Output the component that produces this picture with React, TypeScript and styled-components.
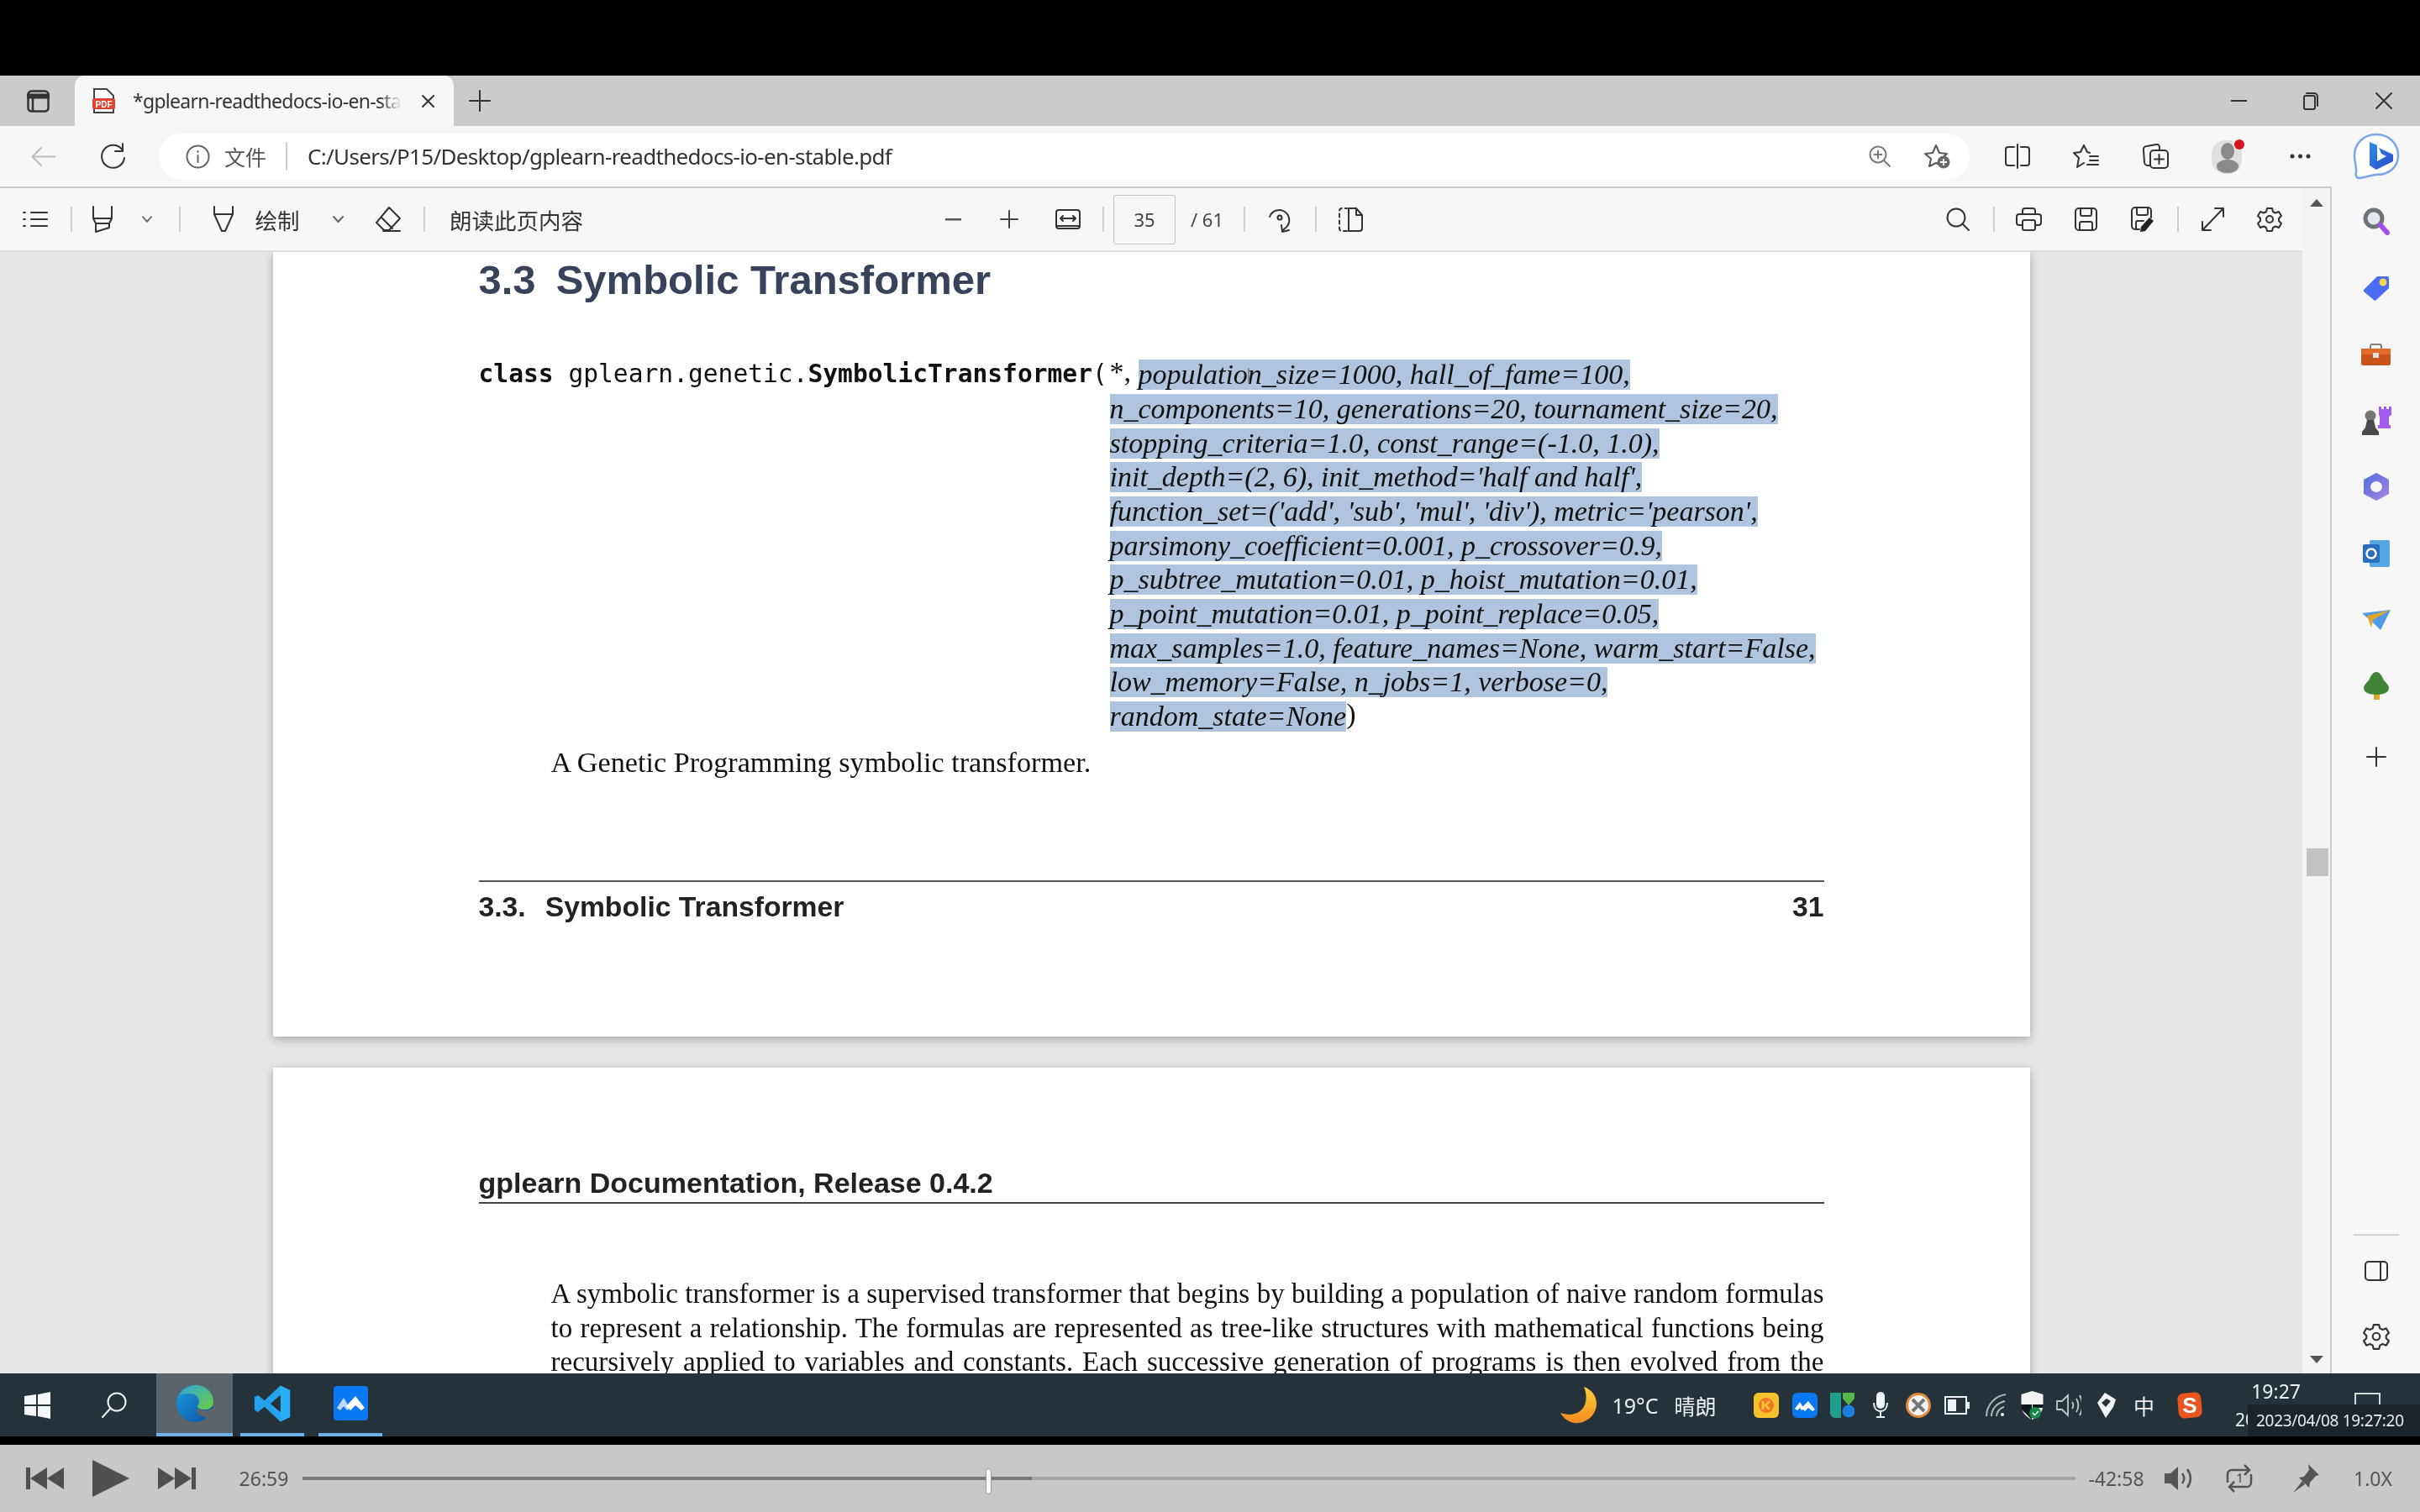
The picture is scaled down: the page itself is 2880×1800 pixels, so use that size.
import React from 'react';
import styled, { createGlobalStyle } from 'styled-components';

const GlobalStyle = createGlobalStyle`
  html, body {
    margin: 0;
    padding: 0;
    background: #000;
    font-family: "Noto Sans", "Noto Sans CJK SC", sans-serif;
  }
`;

const Screen = styled.div`
  width: 2880px;
  height: 1800px;
  display: flex;
  flex-direction: column;
  overflow: hidden;
  background: #000;
  position: relative;
  filter: blur(0.6px);
`;

const Slot = styled.span<{ $ml?: number; $w: number }>`
  flex: none;
  display: flex;
  align-items: center;
  justify-content: center;
  margin-left: ${p => p.$ml ?? 0}px;
  width: ${p => p.$w}px;
  color: #333;
  white-space: nowrap;
`;

const TopBlack = styled.div`
  height: 90px;
  flex: none;
`;

const TabStrip = styled.div`
  height: 60px;
  flex: none;
  display: flex;
  align-items: center;
  background: #cbcbcb;
`;

const Tab = styled.div`
  flex: none;
  align-self: stretch;
  width: 451px;
  margin-left: 30px;
  display: flex;
  align-items: center;
  background: #f7f7f7;
  border-radius: 12px 12px 0 0;
`;

const TabTitle = styled.span`
  flex: none;
  width: 320px;
  margin-left: 20px;
  overflow: hidden;
  white-space: nowrap;
  font-size: 23px;
  letter-spacing: -0.7px;
  color: #333;
  -webkit-mask-image: linear-gradient(90deg, #000 92%, transparent);
  mask-image: linear-gradient(90deg, #000 92%, transparent);
`;

const AddressRow = styled.div`
  height: 72px;
  flex: none;
  display: flex;
  align-items: center;
  background: #f7f7f7;
`;

const Omnibox = styled.div`
  flex: none;
  width: 2155px;
  height: 55px;
  margin-left: 39px;
  display: flex;
  align-items: center;
  background: #fff;
  border-radius: 28px;
  padding-right: 22px;
  box-sizing: border-box;
`;

const AddressLabel = styled.span`
  font-size: 25px;
  color: #555;
  flex: none;
  margin-left: 17px;
`;

const Divider = styled.span<{ $ml: number; $h?: number }>`
  flex: none;
  width: 2px;
  height: ${p => p.$h ?? 30}px;
  margin-left: ${p => p.$ml}px;
  background: #cfcfcf;
`;

const Url = styled.span`
  margin-left: 24px;
  margin-right: auto;
  font-size: 26px;
  letter-spacing: -0.67px;
  color: #333;
  white-space: nowrap;
`;

const Workspace = styled.div`
  flex: 1;
  min-height: 0;
  display: flex;
`;

const Viewer = styled.div`
  flex: none;
  width: 2775px;
  box-sizing: border-box;
  display: flex;
  border-top: 2px solid #c8c8c8;
`;

const ViewerMain = styled.div`
  flex: none;
  width: 2740px;
  display: flex;
  flex-direction: column;
  min-height: 0;
`;

const PdfToolbar = styled.div`
  height: 74px;
  flex: none;
  display: flex;
  align-items: center;
  background: #f7f7f7;
  border-bottom: 2px solid #dedede;
`;

const PageBox = styled.span`
  flex: none;
  width: 74px;
  height: 59px;
  box-sizing: border-box;
  margin-left: 11px;
  display: flex;
  align-items: center;
  justify-content: center;
  border: 1px solid #c4c4c4;
  border-radius: 3px;
  font-size: 22px;
  color: #444;
`;

const ToolText = styled(Slot)`
  font-size: 26.5px;
  color: #333;
`;

const PageCount = styled(Slot)`
  font-size: 22px;
  color: #444;
`;

const DocArea = styled.div`
  flex: 1;
  min-height: 0;
  overflow: hidden;
  display: flex;
  flex-direction: column;
  align-items: center;
  gap: 37px;
  background: #e6e6e6;
`;

const Page = styled.div<{ $h: number }>`
  flex: none;
  width: 2091px;
  height: ${p => p.$h}px;
  box-sizing: border-box;
  padding: 0 245px;
  position: relative;
  background: #fff;
  box-shadow: 0 3px 10px rgba(0, 0, 0, 0.28);
  font-family: "Liberation Serif", serif;
  color: #111;
`;

const SectionTitle = styled.h2`
  margin: 0;
  padding-top: 3px;
  height: 60px;
  line-height: 60px;
  font-family: "Liberation Sans", sans-serif;
  font-size: 49px;
  font-weight: 700;
  color: #38425a;
  display: flex;
  gap: 24px;
`;

const Signature = styled.div`
  margin-top: 60px;
  display: flex;
`;

const SigName = styled.div`
  flex: none;
  width: 751px;
  height: 41px;
  padding-top: 2px;
  line-height: 41px;
  font-family: "DejaVu Sans Mono", "Liberation Mono", monospace;
  font-size: 29.6px;
  color: #111;
  white-space: pre;
`;

const SigParams = styled.div`
  flex: none;
  font-size: 34px;
  font-style: italic;
`;

const ParamLine = styled.div`
  height: 40.7px;
  line-height: 40.7px;
  white-space: pre;
`;

const Selected = styled.span`
  display: inline-block;
  height: 36px;
  line-height: 36px;
  vertical-align: middle;
  background: #afc5df;
`;

const Upright = styled.span`
  font-style: normal;
`;

const Summary = styled.p`
  margin: 17px 0 0 86px;
  font-size: 34.2px;
  line-height: 40px;
`;

const PageFooter = styled.div`
  margin-top: 120px;
  padding-top: 9px;
  border-top: 2px solid #555;
  display: flex;
  justify-content: space-between;
  font-family: "Liberation Sans", sans-serif;
  font-size: 33.7px;
  font-weight: 700;
  line-height: 40px;
  color: #222;
`;

const FooterLabel = styled.span`
  display: flex;
  gap: 23px;
`;

const PageHeader = styled.div`
  padding-top: 117px;
  padding-bottom: 3px;
  line-height: 40px;
  border-bottom: 2px solid #444;
  font-family: "Liberation Sans", sans-serif;
  font-size: 34px;
  font-weight: 700;
  color: #222;
`;

const Paragraph = styled.div`
  margin: 87px 0 0 86px;
  font-size: 33px;
`;

const ParaLine = styled.div`
  height: 40.7px;
  line-height: 40.7px;
  text-align: justify;
  text-align-last: justify;
`;

const Cursor = styled.span`
  position: absolute;
  left: 1160px;
  top: 138px;
  width: 2px;
  height: 18px;
  background: #8a8a8a;
`;

const ScrollTrack = styled.div`
  flex: none;
  width: 35px;
  box-sizing: border-box;
  display: flex;
  flex-direction: column;
  align-items: center;
  position: relative;
  background: #f4f4f4;
  border-right: 2px solid #cbcbcb;
`;

const ScrollThumb = styled.div`
  position: absolute;
  left: 5px;
  top: 786px;
  width: 26px;
  height: 33px;
  background: #c2c2c2;
`;

const ScrollUp = styled.span`
  margin-top: 13px;
  width: 0;
  height: 0;
  border-left: 8px solid transparent;
  border-right: 8px solid transparent;
  border-bottom: 9px solid #555;
`;

const ScrollDown = styled.span`
  margin-top: auto;
  margin-bottom: 12px;
  width: 0;
  height: 0;
  border-left: 8px solid transparent;
  border-right: 8px solid transparent;
  border-top: 9px solid #555;
`;

const Sidebar = styled.div`
  flex: 1;
  display: flex;
  flex-direction: column;
  align-items: center;
  padding: 2px 0 1px;
  background: #f7f7f7;
`;

const SideSlot = styled.div<{ $h?: number }>`
  flex: none;
  height: ${p => p.$h ?? 79}px;
  display: flex;
  align-items: center;
  justify-content: center;
`;

const SideRule = styled.div`
  margin-top: auto;
  margin-bottom: 7px;
  width: 54px;
  height: 2px;
  background: #cfcfcf;
`;

const Taskbar = styled.div`
  height: 75px;
  flex: none;
  display: flex;
  align-items: center;
  background: #25323a;
`;

const TaskApp = styled.div<{ $ml: number; $w: number; $active?: boolean }>`
  flex: none;
  align-self: stretch;
  width: ${p => p.$w}px;
  margin-left: ${p => p.$ml}px;
  display: flex;
  align-items: center;
  justify-content: center;
  box-sizing: border-box;
  border-bottom: 4px solid #6db1e6;
  background: ${p => (p.$active ? '#5a646a' : 'transparent')};
`;

const TrayText = styled(Slot)`
  color: #eef2f4;
  font-size: 25px;
`;

const Clock = styled.div`
  flex: none;
  width: 78px;
  margin-left: 39px;
  display: flex;
  flex-direction: column;
  color: #eef2f4;
  font-size: 21px;
  line-height: 34px;
  white-space: nowrap;
`;

const ClockTime = styled.span`
  text-align: right;
  font-size: 23px;
`;

const NotifyBox = styled.span`
  flex: none;
  width: 31px;
  height: 36px;
  box-sizing: border-box;
  margin: 6px 0 0 64px;
  border: 2px solid #d5d9dc;
`;

const Stamp = styled.div`
  position: absolute;
  right: 0;
  top: 1672px;
  width: 205px;
  height: 38px;
  display: flex;
  align-items: center;
  padding-left: 10px;
  box-sizing: border-box;
  background: #1b252b;
  color: #e8ecee;
  font-size: 19px;
  letter-spacing: -0.3px;
  white-space: nowrap;
`;

const BlackGap = styled.div`
  height: 10px;
  flex: none;
`;

const Player = styled.div`
  height: 80px;
  flex: none;
  display: flex;
  align-items: center;
  background: #c8c8c8;
`;

const PlayerText = styled(Slot)`
  color: #555;
  font-size: 23px;
`;

const SeekBar = styled.div`
  flex: none;
  width: 2110px;
  height: 4px;
  margin-left: 15px;
  position: relative;
  background: #a6a6a6;
`;

const SeekFill = styled.div`
  position: absolute;
  left: 0;
  top: 0;
  bottom: 0;
  background: #7a7a7a;
`;

const SeekHandle = styled.div`
  position: absolute;
  top: -10px;
  width: 7px;
  height: 31px;
  margin-left: -3px;
  box-sizing: border-box;
  border: 1px solid #9a9a9a;
  border-radius: 4px;
  background: #fafafa;
`;

const ic = { fill: 'none', stroke: '#333', strokeWidth: 2, strokeLinecap: 'round', strokeLinejoin: 'round' } as const;
const lt = { ...ic, stroke: '#eef2f4' };

const params = [
  'population_size=1000, hall_of_fame=100,',
  'n_components=10, generations=20, tournament_size=20,',
  'stopping_criteria=1.0, const_range=(-1.0, 1.0),',
  "init_depth=(2, 6), init_method='half and half',",
  "function_set=('add', 'sub', 'mul', 'div'), metric='pearson',",
  'parsimony_coefficient=0.001, p_crossover=0.9,',
  'p_subtree_mutation=0.01, p_hoist_mutation=0.01,',
  'p_point_mutation=0.01, p_point_replace=0.05,',
  'max_samples=1.0, feature_names=None, warm_start=False,',
  'low_memory=False, n_jobs=1, verbose=0,',
];

const Gear = ({ s = 30 }: { s?: number }) => (
  <svg width={s} height={s} viewBox="0 0 30 30" {...ic}>
    <path d="M12 2h6l1 4 3 1.500 4-1.500 3 5-3 3v3l3 3-3 5-4-1.500-3 1.500-1 4h-6l-1-4-3-1.500-4 1.500-3-5 3-3v-3l-3-3 3-5 4 1.500 3-1.500z" />
    <circle cx="15" cy="15" r="4" />
  </svg>
);

const Chevron = () => (
  <svg width="13" height="8" viewBox="0 0 13 8" {...ic} stroke="#666">
    <path d="M1 1l5.500 6L12 1" />
  </svg>
);

const Bar = ({ ml }: { ml: number }) => <Divider $ml={ml} />;

function TabBar() {
  return (
    <TabStrip>
      <Slot $ml={32} $w={27}>
        <svg width="27" height="27" viewBox="0 0 27 27" {...ic} strokeWidth={2.500}>
          <rect x="1.500" y="1.500" width="24" height="24" rx="4" />
          <path d="M1.500 7.500h24" strokeWidth={6} />
          <path d="M7 7v18" />
        </svg>
      </Slot>
      <Tab>
        <Slot $ml={20} $w={29}>
          <svg width="29" height="30" viewBox="0 0 29 30">
            <path d="M3 1h15l8 8v20H3z" fill="#fff" stroke="#444" strokeWidth="2" />
            <rect x="1" y="12" width="27" height="13" rx="2" fill="#e2432f" />
            <text x="14.500" y="22.500" fontSize="10" fontWeight="700" fill="#fff" textAnchor="middle" fontFamily="Liberation Sans">PDF</text>
          </svg>
        </Slot>
        <TabTitle>*gplearn-readthedocs-io-en-stable.pdf</TabTitle>
        <Slot $ml={24} $w={15}>
          <svg width="15" height="15" viewBox="0 0 15 15" {...ic}>
            <path d="M1 1l13 13M14 1L1 14" />
          </svg>
        </Slot>
      </Tab>
      <Slot $ml={18} $w={26}>
        <svg width="26" height="26" viewBox="0 0 26 26" {...ic}>
          <path d="M13 1v24M1 13h24" />
        </svg>
      </Slot>
      <Slot $ml={2071} $w={19}>
        <svg width="19" height="3" viewBox="0 0 19 3">
          <rect width="19" height="2" fill="#333" />
        </svg>
      </Slot>
      <Slot $ml={67} $w={18}>
        <svg width="18" height="22" viewBox="0 0 18 22" {...ic}>
          <rect x="1" y="5" width="13" height="16" rx="2" />
          <path d="M4 2h9a4 4 0 0 1 4 4v11" />
        </svg>
      </Slot>
      <Slot $ml={68} $w={20}>
        <svg width="20" height="20" viewBox="0 0 20 20" {...ic}>
          <path d="M1 1l18 18M19 1L1 19" />
        </svg>
      </Slot>
    </TabStrip>
  );
}

function AddressBar() {
  return (
    <AddressRow>
      <Slot $ml={37} $w={29}>
        <svg width="29" height="25" viewBox="0 0 29 25" {...ic} stroke="#bdbdbd">
          <path d="M28 12.500H2M12 2L1.500 12.500 12 23" />
        </svg>
      </Slot>
      <Slot $ml={53} $w={31}>
        <svg width="31" height="33" viewBox="0 0 31 33" {...ic}>
          <path d="M27 9A13.500 13.500 0 1 0 29 18" />
          <path d="M27 1v9h-9" />
        </svg>
      </Slot>
      <Omnibox>
        <Slot $ml={32} $w={29}>
          <svg width="29" height="29" viewBox="0 0 29 29" {...ic} stroke="#666">
            <circle cx="14.500" cy="14.500" r="13" />
            <path d="M14.500 13v8M14.500 8v1" />
          </svg>
        </Slot>
        <AddressLabel>文件</AddressLabel>
        <Divider $ml={23} $h={34} />
        <Url>C:/Users/P15/Desktop/gplearn-readthedocs-io-en-stable.pdf</Url>
        <Slot $w={26}>
          <svg width="26" height="26" viewBox="0 0 26 26" {...ic} stroke="#777">
            <circle cx="11" cy="11" r="9.500" />
            <path d="M18 18l7 7M11 6.500v9M6.500 11h9" />
          </svg>
        </Slot>
        <Slot $ml={39} $w={33}>
          <svg width="33" height="30" viewBox="0 0 33 30">
            <path d="M15 2l4 9 9 1-7 6 2 9-8-4-8 4 2-9-7-6 9-1z" fill="none" stroke="#555" strokeWidth="2" strokeLinejoin="round" />
            <circle cx="24" cy="22" r="7.500" fill="#6a6a6a" />
            <path d="M24 18v8M20 22h8" stroke="#fff" strokeWidth="2" />
          </svg>
        </Slot>
      </Omnibox>
      <Slot $ml={42} $w={30}>
        <svg width="30" height="30" viewBox="0 0 30 30" {...ic}>
          <path d="M11 4H4a3 3 0 0 0-3 3v16a3 3 0 0 0 3 3h7M19 4h7a3 3 0 0 1 3 3v16a3 3 0 0 1-3 3h-7M15 1v28" />
        </svg>
      </Slot>
      <Slot $ml={51} $w={32}>
        <svg width="32" height="30" viewBox="0 0 32 30" {...ic}>
          <path d="M20 11l-3-1-4-8-4 8-8 1 6 6-2 11 8-5" />
          <path d="M20 15h10M20 20h10M17 25h13" />
        </svg>
      </Slot>
      <Slot $ml={51} $w={31}>
        <svg width="31" height="30" viewBox="0 0 31 30" {...ic}>
          <rect x="9" y="8" width="21" height="21" rx="4" />
          <path d="M19.500 13v11M14 18.500h11M9 26H6a4 4 0 0 1-4-4L1 8a4 4 0 0 1 4-5l11-2a3 3 0 0 1 4 3v3" />
        </svg>
      </Slot>
      <Slot $ml={50} $w={41}>
        <svg width="41" height="42" viewBox="0 0 41 42">
          <rect x="1" y="2" width="36" height="40" rx="16" fill="#e0e0e0" />
          <ellipse cx="20" cy="15" rx="8" ry="10" fill="#8a8a8a" />
          <ellipse cx="20" cy="33" rx="13" ry="8" fill="#8a8a8a" />
          <circle cx="34" cy="7" r="6" fill="#d9121f" />
        </svg>
      </Slot>
      <Slot $ml={53} $w={25}>
        <svg width="25" height="6" viewBox="0 0 25 6" fill="#333">
          <circle cx="3" cy="3" r="2.500" />
          <circle cx="12.500" cy="3" r="2.500" />
          <circle cx="22" cy="3" r="2.500" />
        </svg>
      </Slot>
      <Slot $ml={50} $w={56}>
        <svg width="56" height="56" viewBox="0 0 56 56">
          <defs>
            <linearGradient id="bingMark" x1="0" y1="0" x2="1" y2="1">
              <stop offset="0" stopColor="#2f8fe8" />
              <stop offset="1" stopColor="#2b49c8" />
            </linearGradient>
          </defs>
          <path d="M28 2c15 0 26 11 26 25S43 50 28 50c-5 0-12 3-20 4-4 0-5-3-4-8 1-3-2-10-2-19C2 13 13 2 28 2z" fill="#fff" stroke="#7aa7ea" strokeWidth="2.500" />
          <path d="M20 11l9 4v19l11-6-6-3-3-7 17 8v8L28 44l-8-5z" fill="url(#bingMark)" />
        </svg>
      </Slot>
    </AddressRow>
  );
}

function PdfBar() {
  return (
    <PdfToolbar>
      <Slot $ml={27} $w={30}>
        <svg width="30" height="22" viewBox="0 0 30 22" {...ic}>
          <path d="M10 3h19M10 11h19M10 19h19M1 3h2M1 11h2M1 19h2" />
        </svg>
      </Slot>
      <Bar ml={27} />
      <Slot $ml={23} $w={26}>
        <svg width="26" height="32" viewBox="0 0 26 32" {...ic}>
          <path d="M2 1v14l3 6v10l16-5v-5l3-6V1M2 15h22M5 21h16" />
        </svg>
      </Slot>
      <Slot $ml={34} $w={12}>
        <Chevron />
      </Slot>
      <Bar ml={32} />
      <Slot $ml={36} $w={30}>
        <svg width="30" height="32" viewBox="0 0 30 32" {...ic}>
          <path d="M4 1v9l9 20h4l9-20V1M4 10h22" />
        </svg>
      </Slot>
      <ToolText $ml={23} $w={52}>绘制</ToolText>
      <Slot $ml={40} $w={13}>
        <Chevron />
      </Slot>
      <Slot $ml={37} $w={32}>
        <svg width="32" height="32" viewBox="0 0 32 32" {...ic}>
          <path d="M17 2l13 13-13 14h-6L2 20zM8 14l13 13M10 30h20" />
        </svg>
      </Slot>
      <Bar ml={26} />
      <ToolText $ml={31} $w={155}>朗读此页内容</ToolText>
      <Slot $ml={433} $w={19}>
        <svg width="19" height="3" viewBox="0 0 19 3">
          <rect width="19" height="2.500" fill="#555" />
        </svg>
      </Slot>
      <Slot $ml={46} $w={22}>
        <svg width="22" height="22" viewBox="0 0 22 22" {...ic} stroke="#444">
          <path d="M11 1v20M1 11h20" />
        </svg>
      </Slot>
      <Slot $ml={44} $w={30}>
        <svg width="30" height="24" viewBox="0 0 30 24" {...ic}>
          <rect x="1" y="1" width="28" height="22" rx="3" />
          <path d="M1 20h28M6 11h18M9 8l-3 3 3 3M21 8l3 3-3 3" />
        </svg>
      </Slot>
      <Bar ml={26} />
      <PageBox>35</PageBox>
      <PageCount $ml={19} $w={37}>/ 61</PageCount>
      <Bar ml={25} />
      <Slot $ml={25} $w={31}>
        <svg width="31" height="34" viewBox="0 0 31 34" {...ic}>
          <path d="M4 14a12 12 0 1 1 18 14l-3 3" />
          <path d="M18 24l1 8 8-2" />
          <circle cx="16" cy="15" r="2.500" />
        </svg>
      </Slot>
      <Bar ml={27} />
      <Slot $ml={25} $w={31}>
        <svg width="31" height="30" viewBox="0 0 31 30" {...ic}>
          <path d="M11 29H5a3 3 0 0 1-3-3V5a3 3 0 0 1 3-3h6" strokeDasharray="4 4" />
          <path d="M13 2h9l7 8v16a3 3 0 0 1-3 3H13zM22 2v8h7" />
        </svg>
      </Slot>
      <Slot $ml={693} $w={28}>
        <svg width="28" height="28" viewBox="0 0 28 28" {...ic}>
          <circle cx="12" cy="12" r="10.500" />
          <path d="M19.500 19.500L27 27" />
        </svg>
      </Slot>
      <Bar ml={28} />
      <Slot $ml={25} $w={31}>
        <svg width="31" height="28" viewBox="0 0 31 28" {...ic}>
          <path d="M8 8V4a3 3 0 0 1 3-3h9a3 3 0 0 1 3 3v4" />
          <path d="M8 21H4a3 3 0 0 1-3-3v-7a3 3 0 0 1 3-3h23a3 3 0 0 1 3 3v7a3 3 0 0 1-3 3h-4" />
          <rect x="8" y="15" width="15" height="12" rx="2" />
        </svg>
      </Slot>
      <Slot $ml={39} $w={27}>
        <svg width="27" height="28" viewBox="0 0 27 28" {...ic}>
          <rect x="1" y="1" width="25" height="26" rx="4" />
          <path d="M7 1v7a2 2 0 0 0 2 2h9a2 2 0 0 0 2-2V1M6 27v-8a2 2 0 0 1 2-2h11a2 2 0 0 1 2 2v8" />
        </svg>
      </Slot>
      <Slot $ml={40} $w={28}>
        <svg width="28" height="30" viewBox="0 0 28 30">
          <g {...ic}>
            <path d="M10 27H5a4 4 0 0 1-4-4V5a4 4 0 0 1 4-4h15a4 4 0 0 1 4 4v8" />
            <path d="M7 1v7a2 2 0 0 0 2 2h9a2 2 0 0 0 2-2V1M6 27v-8a2 2 0 0 1 2-2h7" />
          </g>
          <path d="M22 13l5 4-10 12-6 1 1-6z" fill="#222" />
        </svg>
      </Slot>
      <Bar ml={27} />
      <Slot $ml={26} $w={29}>
        <svg width="29" height="30" viewBox="0 0 29 30" {...ic}>
          <path d="M27 2L2 28M17 2h10v10M2 18v10h10" />
        </svg>
      </Slot>
      <Slot $ml={38} $w={30}>
        <Gear />
      </Slot>
    </PdfToolbar>
  );
}

function Document() {
  return (
    <DocArea>
      <Page $h={934}>
        <SectionTitle>
          <span>3.3</span>
          <span>Symbolic Transformer</span>
        </SectionTitle>
        <Signature>
          <SigName>
            <b>class</b> gplearn.genetic.<b>SymbolicTransformer</b>(
          </SigName>
          <SigParams>
            <ParamLine>
              <Upright>*, </Upright>
              <Selected>{params[0]}</Selected>
            </ParamLine>
            {params.slice(1).map(line => (
              <ParamLine key={line}>
                <Selected>{line}</Selected>
              </ParamLine>
            ))}
            <ParamLine>
              <Selected>random_state=None</Selected>
              <Upright>)</Upright>
            </ParamLine>
          </SigParams>
        </Signature>
        <Summary>A Genetic Programming symbolic transformer.</Summary>
        <PageFooter>
          <FooterLabel>
            <span>3.3.</span>
            <span>Symbolic Transformer</span>
          </FooterLabel>
          <span>31</span>
        </PageFooter>
        <Cursor />
      </Page>
      <Page $h={500}>
        <PageHeader>gplearn Documentation, Release 0.4.2</PageHeader>
        <Paragraph>
          <ParaLine>A symbolic transformer is a supervised transformer that begins by building a population of naive random formulas</ParaLine>
          <ParaLine>to represent a relationship. The formulas are represented as tree-like structures with mathematical functions being</ParaLine>
          <ParaLine>recursively applied to variables and constants. Each successive generation of programs is then evolved from the</ParaLine>
        </Paragraph>
      </Page>
    </DocArea>
  );
}

function SideIcons() {
  return (
    <Sidebar>
      <SideSlot>
        <svg width="32" height="33" viewBox="0 0 32 33">
          <circle cx="13" cy="13" r="10" fill="#e3e8ee" stroke="#6e7378" strokeWidth="5" />
          <path d="M21 21l8 9" stroke="#a450e8" strokeWidth="6" strokeLinecap="round" />
        </svg>
      </SideSlot>
      <SideSlot>
        <svg width="31" height="30" viewBox="0 0 31 30">
          <path d="M1 17L16 2a3 3 0 0 1 2-1h11a2 2 0 0 1 2 2v12L16 29a2 2 0 0 1-3 0L1 19z" fill="#4a6cf2" />
          <circle cx="24" cy="8" r="4.500" fill="#f1d451" />
        </svg>
      </SideSlot>
      <SideSlot>
        <svg width="35" height="26" viewBox="0 0 35 26">
          <path d="M11 7V3a2 2 0 0 1 2-2h9a2 2 0 0 1 2 2v4" fill="none" stroke="#7f7f7f" strokeWidth="2" />
          <rect x="0" y="6" width="35" height="20" rx="2" fill="#c8541b" />
          <rect x="0" y="6" width="35" height="7" fill="#e06a27" />
          <rect x="14" y="11" width="7" height="6" fill="#ddd" />
        </svg>
      </SideSlot>
      <SideSlot>
        <svg width="36" height="35" viewBox="0 0 36 35">
          <path d="M21 1h3v3h3V1h3v3h3V1h3v10l-3 2v10h2v4H20v-4h2V13l-1-2z" fill="#a35bf0" />
          <circle cx="11" cy="12" r="6.500" fill="#777" />
          <path d="M7 17h8l2 9 4 5v4H1v-4l4-5z" fill="#4a4a4a" />
        </svg>
      </SideSlot>
      <SideSlot>
        <svg width="32" height="33" viewBox="0 0 32 33">
          <defs>
            <linearGradient id="officeRing" x1="0" y1="0" x2="1" y2="1">
              <stop offset="0" stopColor="#4f6fe0" />
              <stop offset="1" stopColor="#a584dd" />
            </linearGradient>
          </defs>
          <path d="M16 0l15 8v17l-15 8-15-8V8z" fill="url(#officeRing)" />
          <ellipse cx="16" cy="16.500" rx="7" ry="6.500" fill="#f7f7f7" />
        </svg>
      </SideSlot>
      <SideSlot>
        <svg width="32" height="32" viewBox="0 0 32 32">
          <rect x="8" y="0" width="24" height="32" rx="2" fill="#55a6e3" />
          <rect x="0" y="5" width="20" height="22" rx="2" fill="#2a6ebd" />
          <circle cx="10" cy="16" r="5.500" fill="none" stroke="#fff" strokeWidth="2.500" />
        </svg>
      </SideSlot>
      <SideSlot>
        <svg width="34" height="24" viewBox="0 0 34 24">
          <path d="M0 4l34-4-12 24-7-7z" fill="#4f9bea" />
          <path d="M6 7l28-7-21 12-2 9z" fill="#dfa62a" />
        </svg>
      </SideSlot>
      <SideSlot>
        <svg width="32" height="33" viewBox="0 0 32 33">
          <rect x="13" y="25" width="7" height="8" fill="#e0a42d" />
          <path d="M16 0c4 0 7 5 9 10 3 3 6 6 6 9 0 5-6 8-15 8S1 24 1 19c0-3 3-6 6-9 2-5 5-10 9-10z" fill="#3f8437" />
        </svg>
      </SideSlot>
      <SideSlot $h={89}>
        <svg width="24" height="24" viewBox="0 0 24 24" {...ic}>
          <path d="M12 1v22M1 12h22" />
        </svg>
      </SideSlot>
      <SideRule />
      <SideSlot $h={70}>
        <svg width="28" height="24" viewBox="0 0 28 24" {...ic}>
          <rect x="1" y="1" width="26" height="22" rx="4" />
          <path d="M19 1v22" />
        </svg>
      </SideSlot>
      <SideSlot $h={86}>
        <Gear s={32} />
      </SideSlot>
    </Sidebar>
  );
}

function WindowsBar() {
  return (
    <Taskbar>
      <Slot $ml={29} $w={31}>
        <svg width="31" height="32" viewBox="0 0 31 32" fill="#f4f6f7">
          <path d="M0 5l14-2v12H0zM16 3l15-3v15H16zM0 17h14v12L0 27zM16 17h15v15l-15-3z" />
        </svg>
      </Slot>
      <Slot $ml={60} $w={31}>
        <svg width="31" height="31" viewBox="0 0 31 31" {...lt}>
          <circle cx="19" cy="12" r="10.500" />
          <path d="M11.500 19.500L2 30" />
        </svg>
      </Slot>
      <TaskApp $ml={35} $w={91} $active>
        <svg width="46" height="46" viewBox="0 0 46 46">
          <defs>
            <linearGradient id="edgeGreen" x1="0" y1="0" x2="1" y2="1">
              <stop offset="0" stopColor="#2ea4df" />
              <stop offset="1" stopColor="#6fd13a" />
            </linearGradient>
            <linearGradient id="edgeBlue" x1="0" y1="0" x2="1" y2="1">
              <stop offset="0" stopColor="#1b9de2" />
              <stop offset="1" stopColor="#0c4f9e" />
            </linearGradient>
          </defs>
          <circle cx="23" cy="23" r="22" fill="url(#edgeBlue)" />
          <path d="M4 13C9 4 18 1 24 1c12 0 21 9 21 20 0 6-5 9-10 9-5 0-9-2-9-4 0-1 2-2 2-5 0-6-5-10-11-10C12 11 7 12 4 13Z" fill="url(#edgeGreen)" />
          <path d="M46 26c-3 4-7 5-11 5-4 0-7-1-9-3-2 3-1 7 3 9l8 3c5-3 9-8 9-14Z" fill="#5a646a" />
        </svg>
      </TaskApp>
      <TaskApp $ml={9} $w={76}>
        <svg width="46" height="46" viewBox="0 0 100 100">
          <path fillRule="evenodd" d="M71 3l25 12v70L71 97 30 58 13 72l-9-5V33l9-5 17 14zM71 28L46 50l25 22z" fill="#23a3ef" />
          <path d="M71 3l25 12v70L71 97z" fill="#2cb0f5" fillOpacity="0.8" />
          <path fillRule="evenodd" d="M71 28L46 50l25 22z" fill="#25323a" />
        </svg>
      </TaskApp>
      <TaskApp $ml={17} $w={76}>
        <svg width="41" height="41" viewBox="0 0 41 41">
          <rect width="41" height="41" rx="4" fill="#0a78f2" />
          <path d="M4 26l8-12 7 12-3 3-4-5-4 5z" fill="#bcd8fb" />
          <path d="M15 24l11-12 11 14-4 3-7-6-6 6z" fill="#fff" />
        </svg>
      </TaskApp>
      <Slot $ml={1402} $w={43}>
        <svg width="43" height="44" viewBox="0 0 43 44">
          <defs>
            <linearGradient id="moonFill" x1="0" y1="0" x2="0" y2="1">
              <stop offset="0" stopColor="#ffd23c" />
              <stop offset="1" stopColor="#f08a1e" />
            </linearGradient>
          </defs>
          <path d="M28 0c5 12 3 26-8 31-7 3-14 2-20 0 5 9 14 13 22 12 13-2 21-12 21-23C43 11 37 3 28 0Z" fill="url(#moonFill)" />
        </svg>
      </Slot>
      <TrayText $ml={18} $w={56}>19°C</TrayText>
      <TrayText $ml={18} $w={51}>晴朗</TrayText>
      <Slot $ml={44} $w={30}>
        <svg width="30" height="30" viewBox="0 0 30 30">
          <rect width="30" height="30" rx="6" fill="#f7c12d" />
          <circle cx="15" cy="15" r="9" fill="#f0752b" />
          <path d="M11 10v10M19 10l-5 5 5 5" stroke="#f7c12d" strokeWidth="3" fill="none" />
        </svg>
      </Slot>
      <Slot $ml={16} $w={30}>
        <svg width="30" height="30" viewBox="0 0 30 30">
          <rect width="30" height="30" rx="6" fill="#0a78f2" />
          <path d="M3 19l6-8 5 8-3 2-2-3-3 3zM11 18l8-8 8 10-3 2-5-4-4 4z" fill="#fff" />
        </svg>
      </Slot>
      <Slot $ml={15} $w={29}>
        <svg width="29" height="30" viewBox="0 0 29 30">
          <path d="M0 0h13v30H6a6 6 0 0 1-6-6z" fill="#1f9e8d" />
          <path d="M15 0h14v7l-7 8-7-8z" fill="#54b948" />
          <circle cx="22" cy="22" r="7.500" fill="#1d7fe0" />
        </svg>
      </Slot>
      <Slot $ml={22} $w={18}>
        <svg width="18" height="31" viewBox="0 0 18 31">
          <rect x="4" y="0" width="10" height="20" rx="5" fill="#eef2f4" />
          <path d="M1 13c0 6 3 10 8 10s8-4 8-10M9 23v7M4 30h10" fill="none" stroke="#eef2f4" strokeWidth="2" />
        </svg>
      </Slot>
      <Slot $ml={21} $w={30}>
        <svg width="30" height="30" viewBox="0 0 30 30">
          <circle cx="15" cy="15" r="13.500" fill="#f3f3f3" stroke="#e08a3c" strokeWidth="3" />
          <path d="M8 8l14 14M22 8L8 22" stroke="#777" strokeWidth="4" />
        </svg>
      </Slot>
      <Slot $ml={16} $w={30}>
        <svg width="30" height="22" viewBox="0 0 30 22">
          <rect x="1" y="1" width="25" height="20" fill="none" stroke="#eef2f4" strokeWidth="2" />
          <rect x="4" y="4" width="10" height="14" fill="#eef2f4" />
          <rect x="27" y="7" width="3" height="8" fill="#eef2f4" />
        </svg>
      </Slot>
      <Slot $ml={19} $w={25}>
        <svg width="25" height="28" viewBox="0 0 25 28" fill="none" stroke="#aeb6ba" strokeWidth="2">
          <path d="M1 27C1 14 11 3 24 1M7 27c0-9 7-16 16-18M13 27c0-5 4-10 9-11" />
          <circle cx="20" cy="25" r="2" fill="#eef2f4" stroke="none" />
        </svg>
      </Slot>
      <Slot $ml={17} $w={27}>
        <svg width="27" height="34" viewBox="0 0 27 34">
          <path d="M13.500 0l13 4v12c0 9-6 15-13 18C6 31 .5 25 .5 16V4z" fill="#f3f3f3" />
          <path d="M13 0v16H0v2l1 4 12 12zM14 16h13c0 2-1 4-1 4H14z" fill="#10181c" />
          <circle cx="17" cy="26" r="7" fill="#14884d" />
          <path d="M14 26l2.500 2.500L21 24" stroke="#fff" fill="none" strokeWidth="1.500" />
        </svg>
      </Slot>
      <Slot $ml={15} $w={30}>
        <svg width="30" height="28" viewBox="0 0 30 28" fill="none" stroke="#c2c8cc" strokeWidth="1.800">
          <path d="M1 9h6l7-7v24l-7-7H1zM19 10c2 3 2 5 0 8M24 6c3 5 3 11 0 16M28 2c4 7 4 17 0 24" />
        </svg>
      </Slot>
      <Slot $ml={19} $w={22}>
        <svg width="22" height="30" viewBox="0 0 22 30">
          <path d="M9 0l13 8-3 9-9 13-10-18z" fill="#f2f4f5" />
          <path d="M5 12l6-5 5 3-6 7z" fill="#25323a" />
        </svg>
      </Slot>
      <TrayText $ml={21} $w={25}>中</TrayText>
      <Slot $ml={27} $w={30}>
        <svg width="30" height="32" viewBox="0 0 30 32">
          <rect x="1" y="1" width="28" height="30" rx="7" fill="#e8551f" transform="rotate(-5 15 16)" />
          <text x="15" y="25" fontSize="26" fontWeight="700" fill="#fff" textAnchor="middle" fontFamily="Liberation Sans">S</text>
        </svg>
      </Slot>
      <Clock>
        <ClockTime>19:27</ClockTime>
        <span>2023/4/8</span>
      </Clock>
      <NotifyBox />
      <Stamp>2023/04/08 19:27:20</Stamp>
    </Taskbar>
  );
}

function PlayerBar() {
  const played = 816;
  const buffered = 868;
  return (
    <Player>
      <Slot $ml={31} $w={45}>
        <svg width="45" height="26" viewBox="0 0 45 26" fill="#4f4f4f">
          <rect width="5" height="26" />
          <path d="M5 13L25 0v26zM25 13L45 0v26z" />
        </svg>
      </Slot>
      <Slot $ml={34} $w={44}>
        <svg width="44" height="46" viewBox="0 0 44 46" fill="#4f4f4f">
          <path d="M0 1l44 22L0 45z" />
        </svg>
      </Slot>
      <Slot $ml={34} $w={45}>
        <svg width="45" height="26" viewBox="0 0 45 26" fill="#4f4f4f">
          <rect x="40" width="5" height="26" />
          <path d="M40 13L20 0v26zM20 13L0 0v26z" />
        </svg>
      </Slot>
      <PlayerText $ml={50} $w={62}>26:59</PlayerText>
      <SeekBar>
        <SeekFill style={{ width: buffered }} />
        <SeekHandle style={{ left: played }} />
      </SeekBar>
      <PlayerText $ml={13} $w={71}>-42:58</PlayerText>
      <Slot $ml={22} $w={34}>
        <svg width="34" height="30" viewBox="0 0 34 30">
          <path d="M0 9h7l9-8v28l-9-8H0z" fill="#555" />
          <path d="M21 9c3 4 3 8 0 12M27 4c5 7 5 15 0 22" fill="none" stroke="#555" strokeWidth="2.500" />
        </svg>
      </Slot>
      <Slot $ml={38} $w={34}>
        <svg width="34" height="34" viewBox="0 0 34 34" fill="none" stroke="#555" strokeWidth="2.500">
          <path d="M3 22V12a5 5 0 0 1 5-5h21M31 12v10a5 5 0 0 1-5 5H5" />
          <path d="M23 1l6 6-6 6M11 21l-6 6 6 6" />
          <path d="M15 14l3-2v10" strokeWidth="1.500" />
        </svg>
      </Slot>
      <Slot $ml={47} $w={31}>
        <svg width="31" height="34" viewBox="0 0 31 34" fill="#555">
          <path d="M18 0l13 13-4 1-7 8-1 6-12-12 6-1 6-8z" />
          <path d="M11 20L0 34l14-10z" />
        </svg>
      </Slot>
      <PlayerText $ml={40} $w={48}>1.0X</PlayerText>
    </Player>
  );
}

export default function App() {
  return (
    <Screen>
      <GlobalStyle />
      <TopBlack />
      <TabBar />
      <AddressBar />
      <Workspace>
        <Viewer>
          <ViewerMain>
            <PdfBar />
            <Document />
          </ViewerMain>
          <ScrollTrack>
            <ScrollUp />
            <ScrollThumb />
            <ScrollDown />
          </ScrollTrack>
        </Viewer>
        <SideIcons />
      </Workspace>
      <WindowsBar />
      <BlackGap />
      <PlayerBar />
    </Screen>
  );
}
